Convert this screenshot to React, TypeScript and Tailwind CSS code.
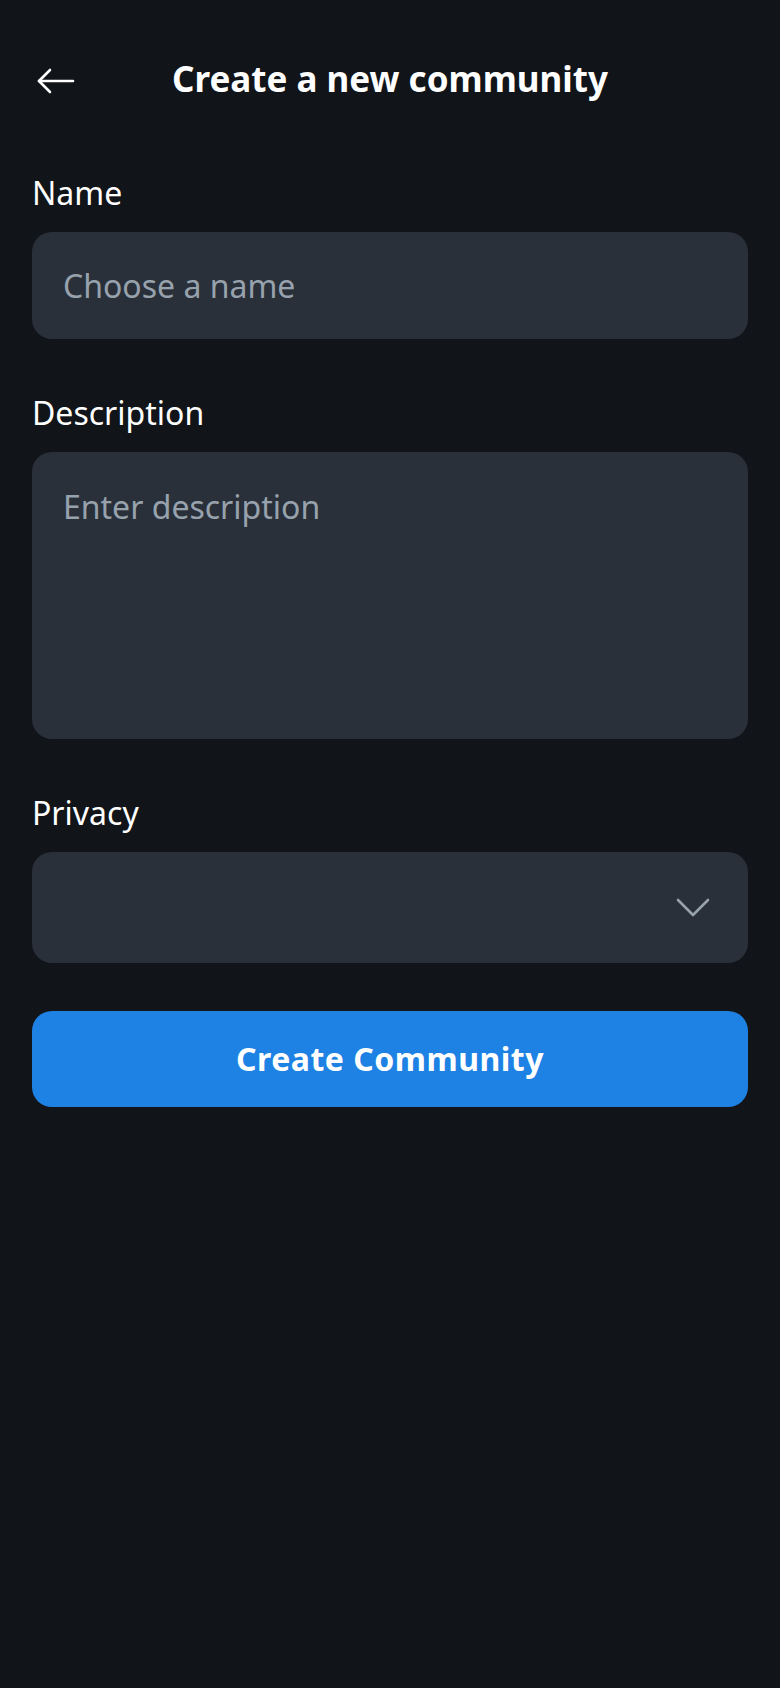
import React, { useState } from 'react';

const BackArrow: React.FC = () => (
  <svg width="38" height="26" viewBox="0 0 38 26" fill="none" stroke="currentColor" strokeWidth="2.6" strokeLinecap="round" strokeLinejoin="round">
    <path d="M36 13H2" />
    <path d="M13 2L2 13L13 24" />
  </svg>
);

const ChevronDown: React.FC = () => (
  <svg width="34" height="19" viewBox="0 0 34 19" fill="none" stroke="currentColor" strokeWidth="2.6" strokeLinecap="round" strokeLinejoin="round">
    <path d="M2 2L17 17L32 2" />
  </svg>
);

const Label: React.FC<{ children: React.ReactNode }> = ({ children }) => (
  <label className="block text-[32px] leading-[46px] text-white">{children}</label>
);

const App: React.FC = () => {
  const [name, setName] = useState('');
  const [description, setDescription] = useState('');

  return (
    <div className="min-h-screen bg-[#111418] text-white" style={{ fontFamily: '"Noto Sans", "Open Sans", sans-serif' }}>
      <div className="px-8 pt-[55px]">
        <div className="grid grid-cols-[1fr_auto_1fr] items-center">
          <button className="justify-self-start ml-[5px] mt-[4px] text-white">
            <BackArrow />
          </button>
          <h1 className="text-[35px] leading-[48px] font-bold">Create a new community</h1>
          <div />
        </div>

        <div className="mt-[67px]">
          <Label>Name</Label>
          <input
            value={name}
            onChange={e => setName(e.target.value)}
            placeholder="Choose a name"
            className="mt-[16px] block w-full h-[107px] rounded-[20px] bg-[#29303a] px-[31px] text-[32px] text-white placeholder:text-[#97a2ad] outline-none"
          />
        </div>

        <div className="mt-[51px]">
          <Label>Description</Label>
          <textarea
            value={description}
            onChange={e => setDescription(e.target.value)}
            placeholder="Enter description"
            className="mt-[16px] block w-full h-[287px] resize-none rounded-[20px] bg-[#29303a] px-[31px] pt-[33px] text-[32px] leading-[44px] text-white placeholder:text-[#97a2ad] outline-none"
          />
        </div>

        <div className="mt-[51px]">
          <Label>Privacy</Label>
          <div className="mt-[16px] flex h-[111px] items-center justify-end rounded-[20px] bg-[#29303a] pr-[38px] text-[#97a2ad]">
            <ChevronDown />
          </div>
        </div>

        <button className="mt-[48px] flex h-[96px] w-full items-center justify-center rounded-[20px] bg-[#1e82e4] text-[32px] font-bold tracking-[0.5px] text-white">
          Create Community
        </button>
      </div>
    </div>
  );
};

export default App;
